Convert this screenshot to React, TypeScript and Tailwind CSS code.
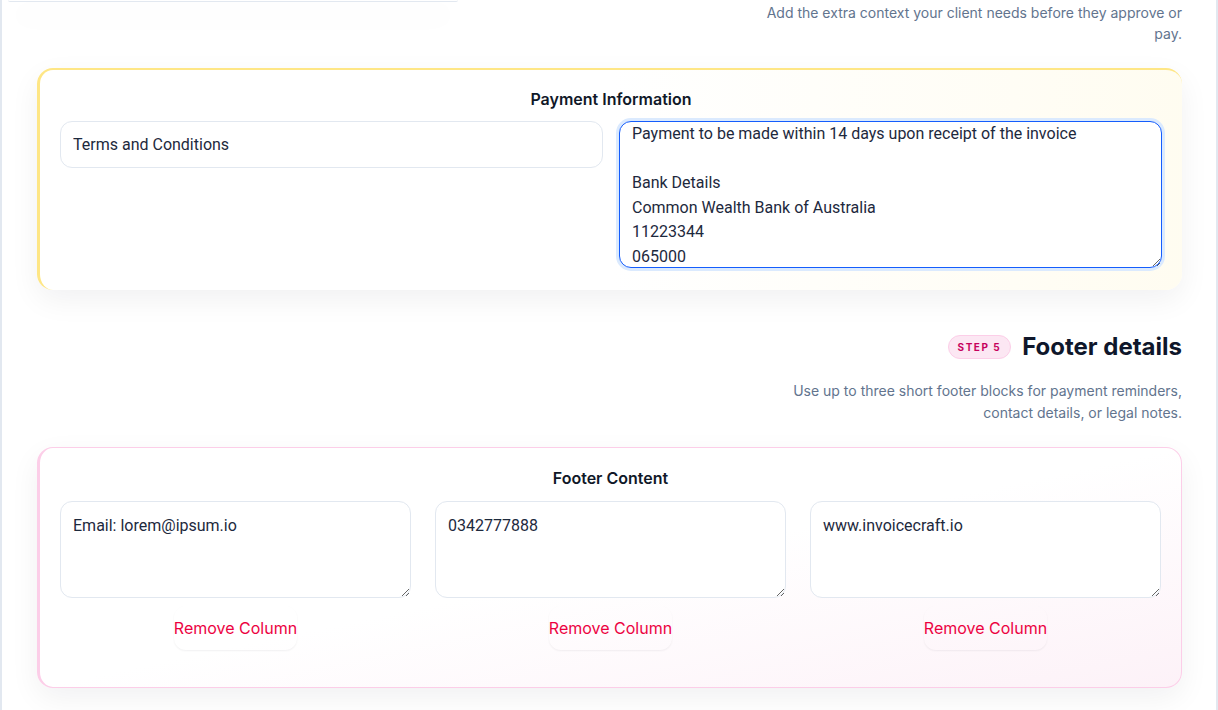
import { useEffect, useRef } from 'react';

const paymentText = `Payment to be made within 14 days upon receipt of the invoice

Bank Details
Common Wealth Bank of Australia
11223344
065000`;

const footerColumns = ['Email: lorem@ipsum.io', '0342777888', 'www.invoicecraft.io'];

const App = () => {
  const termsRef = useRef<HTMLTextAreaElement>(null);

  useEffect(() => {
    if (termsRef.current) termsRef.current.scrollTop = 0;
  }, []);

  return (
    <div className="w-[1218px] h-[710px] overflow-hidden bg-white font-['Inter',sans-serif]">
      <div className="h-full border-l-2 border-r-2 border-slate-200 pl-[35px] pr-[34px]">
        {/* bottom edge of the previous card */}
        <div className="-ml-[29px] w-[450px] h-[2px] rounded-b-lg border-b border-slate-200 bg-white shadow-[0_14px_32px_rgba(15,23,42,0.1)]" />

        <p className="ml-auto max-w-[420px] text-right text-sm leading-[21px] text-slate-500">
          Add the extra context your client needs before they approve or pay.
        </p>

        <section className="mt-6 rounded-2xl border-t-2 border-l-[3px] border-amber-200 bg-gradient-to-r from-white via-white to-amber-50/70 px-5 pt-[17px] pb-[22px] shadow-[0_10px_30px_rgba(15,23,42,0.06)]">
          <h3 className="text-center text-base font-semibold leading-6 text-gray-900">Payment Information</h3>
          <div className="mt-2.5 grid grid-cols-2 gap-4 items-start">
            <input
              defaultValue="Terms and Conditions"
              className="h-[47px] w-full rounded-xl border border-slate-200 bg-white px-3 font-['Roboto',sans-serif] text-base text-slate-800 outline-none"
            />
            <textarea
              ref={termsRef}
              defaultValue={paymentText}
              className="h-[147px] w-full resize-y overflow-hidden rounded-xl border border-blue-600 bg-white px-3 py-0 font-['Roboto',sans-serif] text-base leading-[24.5px] text-slate-800 outline-none ring-[3px] ring-blue-100"
            />
          </div>
        </section>

        <div className="mt-[41px] flex items-center justify-end gap-[11px]">
          <span className="rounded-full border border-pink-200 bg-pink-100 px-[9px] py-[5px] text-[10px] font-bold leading-3 tracking-[0.15em] text-pink-700">
            STEP 5
          </span>
          <h2 className="text-2xl font-bold leading-8 text-slate-900">Footer details</h2>
        </div>
        <p className="mt-[17px] ml-auto max-w-[420px] text-right text-sm leading-[22px] text-slate-500">
          Use up to three short footer blocks for payment reminders, contact details, or legal notes.
        </p>

        <section className="mt-[23px] rounded-2xl border border-l-[3px] border-pink-200 bg-gradient-to-br from-white via-white to-pink-50 px-5 pt-[18px] pb-[37px] shadow-[0_10px_30px_rgba(15,23,42,0.06)]">
          <h3 className="text-center text-base font-semibold leading-6 text-gray-900">Footer Content</h3>
          <div className="mt-[11px] grid grid-cols-3 gap-6">
            {footerColumns.map((text) => (
              <div key={text} className="flex flex-col items-center">
                <textarea
                  defaultValue={text}
                  className="h-[97px] w-full resize-y rounded-xl border border-slate-200 bg-white px-3 py-3 font-['Roboto',sans-serif] text-base leading-6 text-slate-800 outline-none"
                />
                <button className="mt-2 rounded-xl bg-transparent py-2.5 text-base leading-6 text-rose-600 shadow-[0_1px_2px_rgba(15,23,42,0.06)]">
                  Remove Column
                </button>
              </div>
            ))}
          </div>
        </section>
      </div>
    </div>
  );
};

export default App;
